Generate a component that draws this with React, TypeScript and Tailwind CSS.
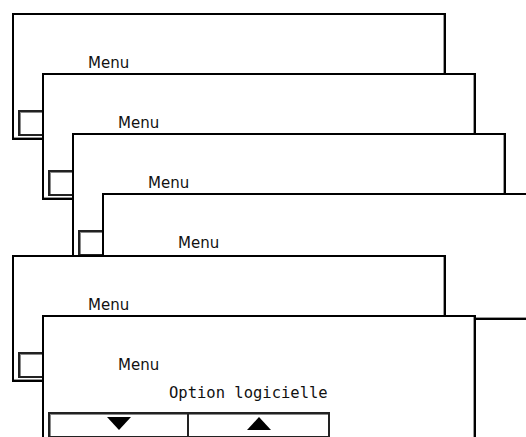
import React from "react";

// Stacked screens of the menu navigation diagram
const screens = [
  { left: 12, top: 13, option: false },
  { left: 42, top: 73, option: false },
  { left: 72, top: 133, option: false },
  { left: 102, top: 193, option: false },
  { left: 12, top: 255, option: false },
  { left: 42, top: 315, option: true },
];

function ArrowDown() {
  return (
    <svg width="24" height="13" viewBox="0 0 24 13" className="block">
      <path d="M0 0h24L12 13z" fill="#000" />
    </svg>
  );
}

function ArrowUp() {
  return (
    <svg width="24" height="13" viewBox="0 0 24 13" className="block">
      <path d="M12 0l12 13H0z" fill="#000" />
    </svg>
  );
}

function Screen({ left, top, option }: { left: number; top: number; option: boolean }) {
  return (
    <div
      className="absolute w-[434px] h-[127px] bg-white border-2 border-black shadow-[inset_-1px_-1px_0_#9a9a9a] flex flex-col"
      style={{ left, top }}
    >
      <div className="pl-[74px] pt-[40px] h-[56px] text-[15px] leading-[16px] text-[#111] font-['DejaVu_Sans',sans-serif]">
        Menu
      </div>
      <div className="mt-[12px] pl-[125px] h-[16px] text-[15.5px] leading-[16px] text-[#111] font-['DejaVu_Sans_Mono',monospace]">
        {option ? "Option logicielle" : ""}
      </div>
      <div className="ml-[4px] mt-[11px] w-[282px] h-[26px] shrink-0 border-2 border-[#222] shadow-[inset_1px_1px_0_#8a8a8a] flex">
        <div className="w-[139px] border-r-2 border-[#222] flex justify-center pt-[3px]">
          <ArrowDown />
        </div>
        <div className="flex-1 flex justify-center pt-[3px]">
          <ArrowUp />
        </div>
      </div>
    </div>
  );
}

export default function App() {
  return (
    <div className="relative w-[526px] h-[437px] overflow-hidden bg-white">
      {screens.map((s, i) => (
        <Screen key={i} left={s.left} top={s.top} option={s.option} />
      ))}
    </div>
  );
}
